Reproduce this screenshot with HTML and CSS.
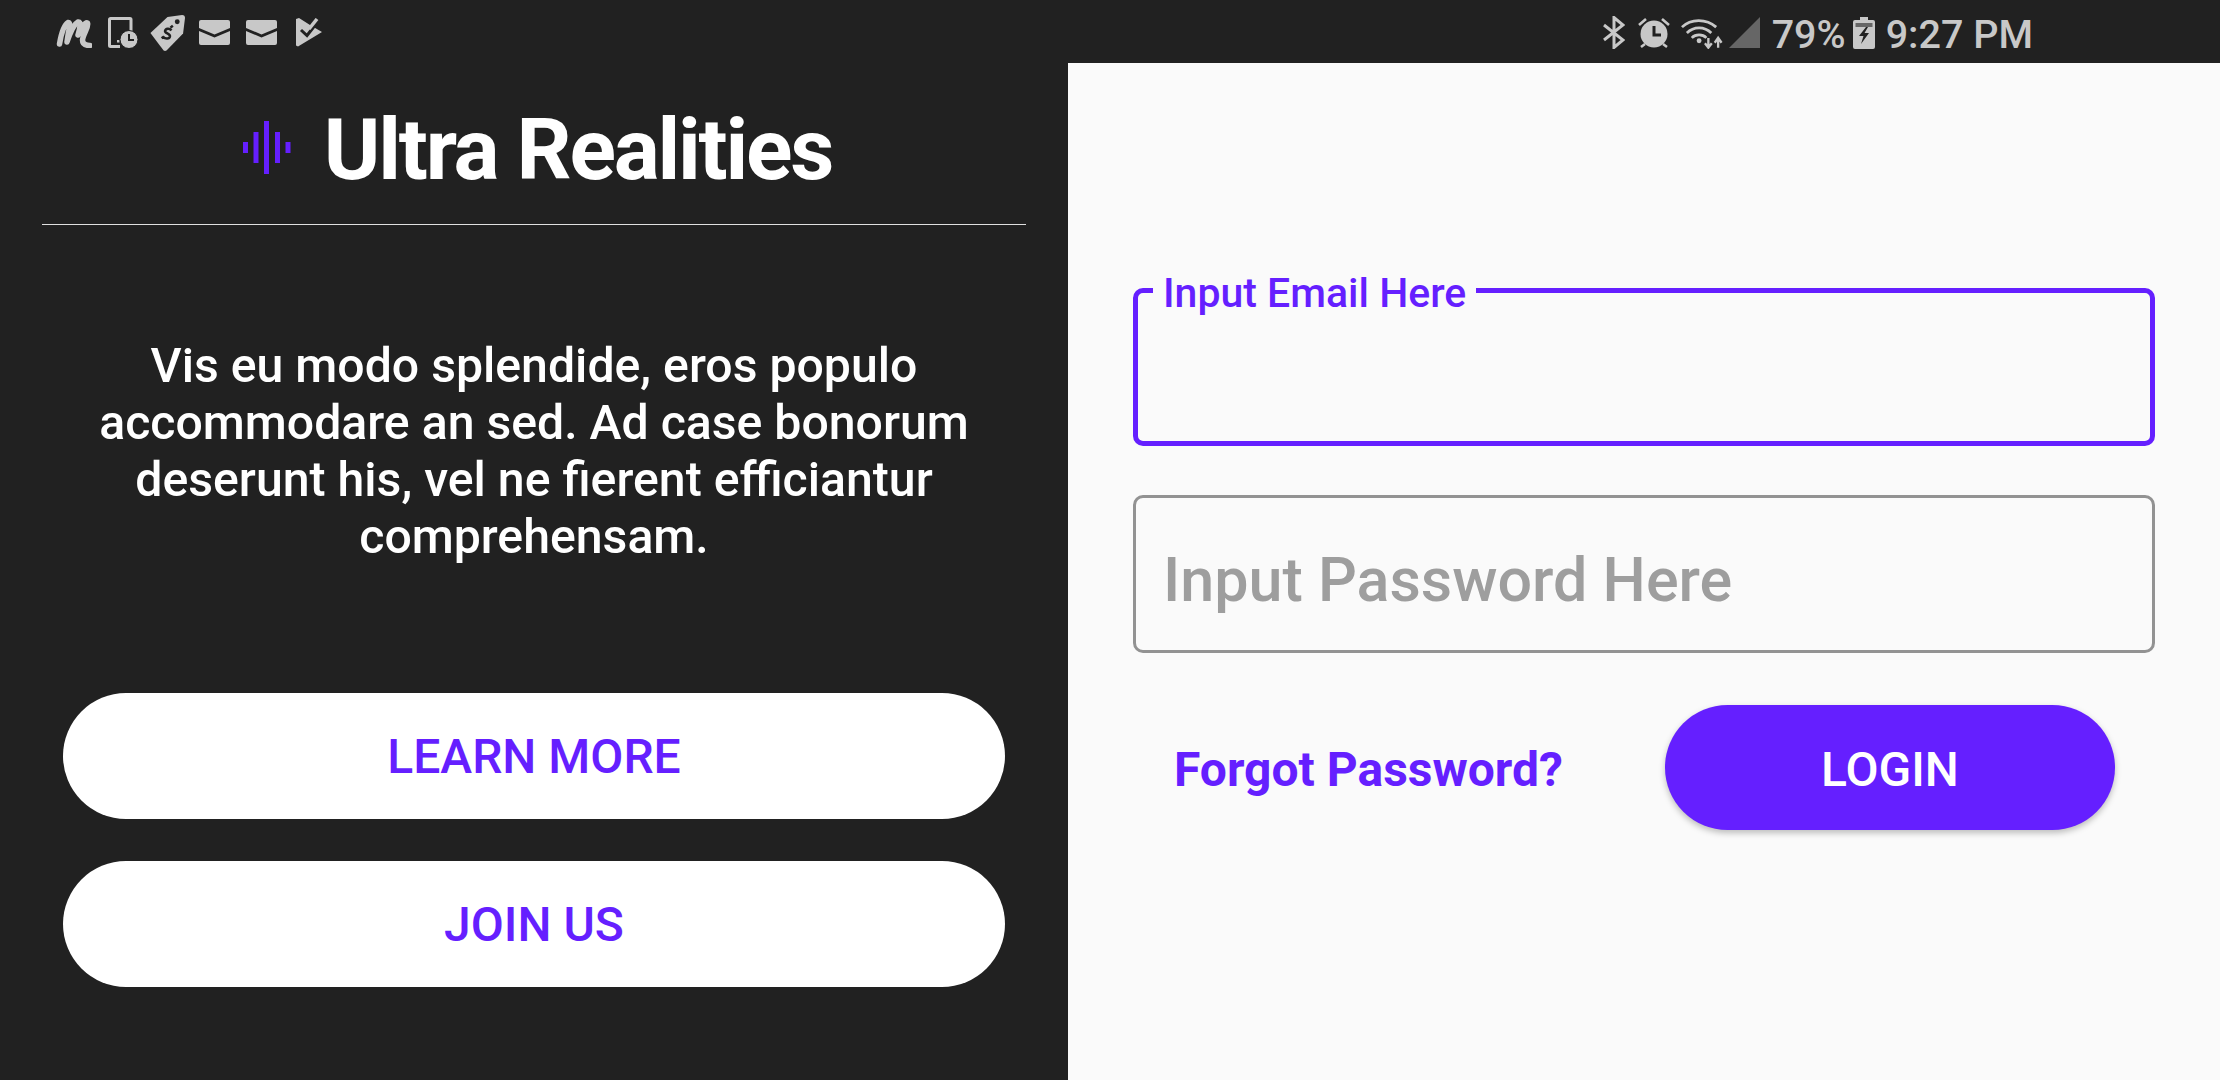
FILE: index.html
```html
<!DOCTYPE html>
<html lang="en">
<head>
    <meta charset="UTF-8">
    <meta name="viewport" content="width=device-width, initial-scale=1.0">
    <title>Ultra Realities</title>
    <link rel="stylesheet" href="styles.css">
</head>
<body>

    <header class="status-bar">
        <div class="status-left">
            <svg class="icon moo" width="36" height="30" viewBox="0 0 36 30"><path d="M3.500 26 C5 17 8 7 12 4.500 C14.500 4 14 9 12.500 14 L11 24 C14 15 18 6 22 4 C25.500 3.500 24 10 22 17 C25 11 29 3.500 31.500 5 C33.500 8 27 16 26.500 22 C26.500 26.500 30 27.500 34 27.500" fill="none" stroke="#c8c8c8" stroke-width="5.500" stroke-linecap="round" stroke-linejoin="round"/></svg>
            <svg class="icon tablet" width="30" height="31" viewBox="0 0 30 31"><path d="M12 29.500H2.500a1 1 0 0 1-1-1V2.500a1 1 0 0 1 1-1H22a1 1 0 0 1 1 1V14" fill="none" stroke="#c8c8c8" stroke-width="3"/><rect x="9" y="23" width="2.500" height="2.500" fill="#c8c8c8"/><circle cx="21" cy="22.500" r="9" fill="#c8c8c8" stroke="#212121" stroke-width="1"/><path d="M21 17V23H26" fill="none" stroke="#212121" stroke-width="2"/></svg>
            <svg class="icon tag" width="37" height="37" viewBox="0 0 38 38"><path d="M1.500 19.500 L19 3 L34 1 C36 1 37 2 37 4 L35 20 L18 37.500 C17 38 16 38 15 37.500 Z" fill="#c8c8c8"/><circle cx="29" cy="8" r="2.500" fill="#212121"/><path d="M23 17 C21 14 17 15 16.500 17.500 C16 20 22 20 21.500 23 C21 25.500 17 26 14.500 23.500 M22 14 L24.500 12 M13 25 L15.500 23" fill="none" stroke="#212121" stroke-width="2.600"/></svg>
            <svg class="icon mail" width="31" height="25" viewBox="0 0 31 25"><path d="M2 0H29a2 2 0 0 1 2 2V8L15.500 14.500 0 8V2a2 2 0 0 1 2-2Z" fill="#c8c8c8"/><path d="M0 11L15.500 17.500 31 11V23a2 2 0 0 1-2 2H2a2 2 0 0 1-2-2Z" fill="#c8c8c8"/></svg>
            <svg class="icon mail2" width="31" height="25" viewBox="0 0 31 25"><path d="M2 0H29a2 2 0 0 1 2 2V8L15.500 14.500 0 8V2a2 2 0 0 1 2-2Z" fill="#c8c8c8"/><path d="M0 11L15.500 17.500 31 11V23a2 2 0 0 1-2 2H2a2 2 0 0 1-2-2Z" fill="#c8c8c8"/></svg>
            <svg class="icon" width="26" height="29" viewBox="0 0 26 29"><path d="M0 1L3 0 14 7 26 14 2 28.500 0 27.500Z" fill="#c8c8c8"/><path d="M5 12L11 17.500 20 6" fill="none" stroke="#212121" stroke-width="3"/><path d="M13 11L21 1" fill="none" stroke="#c8c8c8" stroke-width="3.500"/></svg>
        </div>
        <div class="status-right">
            <svg class="icon bt" width="22" height="33" viewBox="0 0 22 33"><path d="M1 9L20 24 11 31.500V1.500L20 9 1 24" fill="none" stroke="#c8c8c8" stroke-width="3"/></svg>
            <svg class="icon alarm" width="32" height="32" viewBox="0 0 32 32"><circle cx="16" cy="17" r="13.500" fill="#c8c8c8"/><path d="M16 9V18H23" fill="none" stroke="#212121" stroke-width="3"/><path d="M1 8L8 2M31 8L24 2M3 30L7 27M29 30L25 27" stroke="#c8c8c8" stroke-width="2.600"/></svg>
            <svg class="icon wifi" width="43" height="33" viewBox="0 0 44 33"><path d="M1 11C10 2 26 2 36 11M6 17C13 10 24 10 31 17M11 22C15 18 22 18 26 22" fill="none" stroke="#c8c8c8" stroke-width="2.800"/><circle cx="18.500" cy="25" r="2.500" fill="#c8c8c8"/><path d="M28 22V31M24.500 27.500L28 32 31.500 27.500M38 32V23M34.500 27L38 22 41.500 27" fill="none" stroke="#c8c8c8" stroke-width="2.400"/></svg>
            <svg class="icon signal" width="31" height="31" viewBox="0 0 31 31"><path d="M0 31L31 0V31Z" fill="#666"/></svg>
            <span class="status-text battery-text">79%</span>
            <svg class="icon batt" width="22" height="32" viewBox="0 0 22 32"><path d="M7 0H15V3H20a2 2 0 0 1 2 2V30a2 2 0 0 1-2 2H2a2 2 0 0 1-2-2V5a2 2 0 0 1 2-2H7Z" fill="#c8c8c8"/><rect x="2.500" y="6" width="17" height="4" fill="#666"/><path d="M13 10L6 19H10.500L8 27 16 16H11.500L15 10Z" fill="#212121"/></svg>
            <span class="status-text">9:27 PM</span>
        </div>
    </header>

    <main class="screen">
        <section class="intro">
            <div class="brand">
                <svg class="brand-logo" width="48" height="53" viewBox="0 0 48 53"><g fill="#651fff"><rect x="0" y="21" width="5" height="11"/><rect x="10.500" y="11" width="5" height="31"/><rect x="21" y="0" width="5" height="53"/><rect x="32" y="11" width="5" height="31"/><rect x="42.500" y="21" width="5" height="11"/></g></svg>
                <h1>Ultra Realities</h1>
            </div>
            <p class="blurb">Vis eu modo splendide, eros populo accommodare an sed. Ad case bonorum deserunt his, vel ne fierent efficiantur comprehensam.</p>
            <div class="intro-buttons">
                <a class="pill" href="#">LEARN MORE</a>
                <a class="pill" href="#">JOIN US</a>
            </div>
        </section>

        <section class="login">
            <div class="field field-active">
                <label class="field-label" for="email">Input Email Here</label>
                <input id="email" class="field-input" type="email">
            </div>
            <div class="field">
                <input id="password" class="field-input" type="password" placeholder="Input Password Here">
            </div>
            <div class="login-actions">
                <a class="forgot" href="#">Forgot Password?</a>
                <button class="login-button" type="button">LOGIN</button>
            </div>
        </section>
    </main>

</body>
</html>
```

FILE: styles.css
```css
* {
    box-sizing: border-box;
}
body {
    font-family: Roboto, "Liberation Sans", sans-serif;
    margin: 0;
    padding: 0;
    width: 2220px;
    height: 1080px;
    overflow: hidden;
    background-color: #212121;
    display: flex;
    flex-direction: column;
}
.status-bar {
    height: 63px;
    display: flex;
    justify-content: space-between;
    align-items: center;
    padding: 2px 187px 0 56px;
    background-color: #212121;
    color: #c8c8c8;
}
.status-left,
.status-right {
    display: flex;
    align-items: center;
}
.icon {
    display: block;
    flex: none;
}
.status-text {
    font-size: 39.500px;
    font-weight: 500;
    line-height: 61px;
    margin-top: 3px;
    white-space: nowrap;
}
.moo { margin-right: 16px; }
.tablet { margin-right: 11px; }
.tag { margin-right: 13px; }
.mail { margin-right: 16px; }
.mail2 { margin-right: 19px; }
.bt { margin-right: 13px; }
.alarm { margin-right: 11px; }
.wifi { margin-right: 5px; }
.signal { margin-right: 12px; }
.battery-text { margin-right: 7px; }
.batt { margin-right: 11px; }

.screen {
    flex: 1;
    display: flex;
}
.intro {
    width: 1068px;
    padding: 0 42px;
    background-color: #212121;
    color: white;
}
.brand {
    height: 162px;
    padding: 8px 0 0 7px;
    display: flex;
    justify-content: center;
    align-items: center;
    gap: 33px;
    border-bottom: 1px solid #e0e0e0;
}
.brand h1 {
    margin: 4px 0 0;
    font-size: 86px;
    font-weight: 700;
    letter-spacing: -2.200px;
    line-height: 1;
}
.blurb {
    margin: 112px 0 0;
    font-size: 48.200px;
    font-weight: 500;
    line-height: 57px;
    text-align: center;
    padding: 0 30px;
}
.intro-buttons {
    margin: 128px 21px 0;
    display: flex;
    flex-direction: column;
    gap: 42px;
}
.pill {
    height: 126px;
    display: flex;
    justify-content: center;
    align-items: center;
    border-radius: 63px;
    background-color: white;
    color: #651fff;
    font-size: 48px;
    font-weight: 500;
    text-decoration: none;
}
.login {
    flex: 1;
    background-color: #fafafa;
    padding: 225px 65px 0 65px;
}
.field {
    position: relative;
    margin-bottom: 49px;
}
.field-input {
    display: block;
    width: 100%;
    height: 158px;
    padding: 12px 27px 0;
    background: transparent;
    border: 3px solid #929292;
    border-radius: 10px;
    font-family: Roboto, "Liberation Sans", sans-serif;
    font-size: 61px;
    font-weight: 500;
    outline: none;
}
.field-input::placeholder {
    color: #9e9e9e;
    opacity: 1;
}
.field-active .field-input {
    border: 5px solid #651fff;
}
.field-label {
    position: absolute;
    left: 20px;
    top: -18px;
    padding: 0 10px;
    background-color: #fafafa;
    color: #651fff;
    font-size: 41px;
    font-weight: 500;
    line-height: 47px;
}
.login-actions {
    display: flex;
    align-items: center;
    margin-top: 52px;
    padding: 0 40px 0 41px;
    justify-content: space-between;
}
.forgot {
    color: #651fff;
    font-size: 48px;
    font-weight: 700;
    text-decoration: none;
    margin-top: 3px;
}
.login-button {
    width: 450px;
    height: 125px;
    padding-top: 4px;
    border: none;
    border-radius: 63px;
    background-color: #651fff;
    color: white;
    font-family: Roboto, "Liberation Sans", sans-serif;
    font-size: 48px;
    font-weight: 500;
    box-shadow: 0 3px 6px rgba(0, 0, 0, 0.25);
}
```
